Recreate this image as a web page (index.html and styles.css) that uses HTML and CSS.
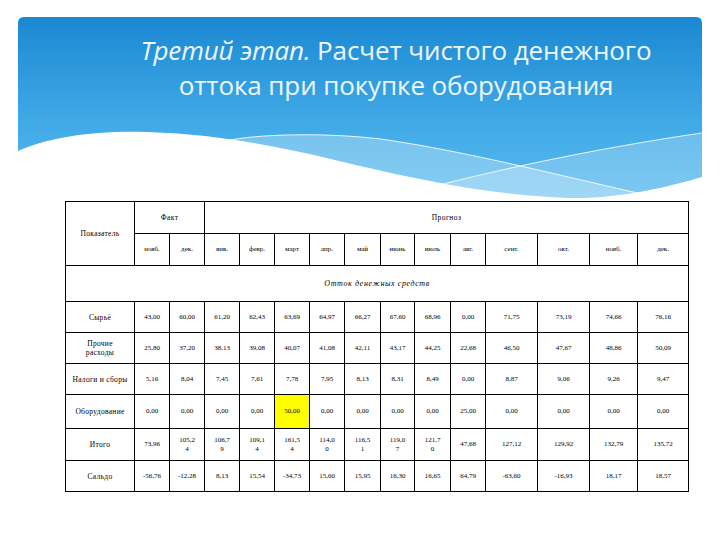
FILE: index.html
```html
<!DOCTYPE html>
<html lang="ru">
<head>
<meta charset="utf-8">
<title>Третий этап</title>
<link rel="stylesheet" href="styles.css">
</head>
<body>
<div class="slide">
  <header class="banner">
    <svg class="banner-bg" viewBox="0 0 684 184" width="684" height="184" aria-hidden="true">
      <defs>
        <linearGradient id="sky" x1="0" y1="0" x2="0" y2="1">
          <stop offset="0" stop-color="#1a88d2"/>
          <stop offset="0.55" stop-color="#3fa9e6"/>
          <stop offset="1" stop-color="#58baef"/>
        </linearGradient>
      </defs>
      <path d="M0,6 Q0,0 6,0 H678 Q684,0 684,6 V184 H0 Z" fill="url(#sky)"/>
      <path d="M212,123 C250,116 320,116 370,123 C450,135 540,158 628,178 L628,184 L212,184 Z" fill="#ffffff" fill-opacity="0.28"/>
      <path d="M425,167 C500,148 600,128 684,116 L684,184 L425,184 Z" fill="#ffffff" fill-opacity="0.22"/>
      <path d="M212,123 C250,116 320,116 370,123 C450,135 540,158 628,178" fill="none" stroke="#ffffff" stroke-opacity="0.85" stroke-width="1"/>
      <path d="M425,167 C500,148 600,128 684,116" fill="none" stroke="#ffffff" stroke-opacity="0.85" stroke-width="1"/>
      <path d="M0,134 C30,120 80,113 130,115 C190,117 240,126 282,135 C350,150 450,178 552,181 C600,182 650,170 684,160 V184 H0 Z" fill="#ffffff"/>
    </svg>
    <h1 class="title"><em>Третий этап.</em> Расчет чистого денежного<br>оттока при покупке оборудования</h1>
  </header>

  <table class="flow">
    <colgroup>
      <col class="c-label">
      <col class="c35"><col class="c35"><col class="c35"><col class="c35"><col class="c35"><col class="c35">
      <col class="c36"><col class="c34"><col class="c36"><col class="c35">
      <col class="c52"><col class="c52"><col class="c48"><col class="c51">
    </colgroup>
    <tr class="h1">
      <td rowspan="2" class="label head-label">Показатель</td>
      <td colspan="2" class="wide">Факт</td>
      <td colspan="12" class="wide">Прогноз</td>
    </tr>
    <tr class="h2">
      <td>нояб.</td><td>дек.</td><td>янв.</td><td>февр.</td><td>март</td><td>апр.</td><td>май</td><td>июнь</td><td>июль</td><td>авг.</td><td>сент.</td><td>окт.</td><td>нояб.</td><td>дек.</td>
    </tr>
    <tr class="section">
      <td colspan="15" class="section-title">Отток денежных средств</td>
    </tr>
    <tr class="r31">
      <td class="label">Сырьё</td>
      <td>43,00</td><td>60,00</td><td>61,20</td><td>62,43</td><td>63,69</td><td>64,97</td><td>66,27</td><td>67,60</td><td>68,96</td><td>0,00</td><td>71,75</td><td>73,19</td><td>74,66</td><td>76,16</td>
    </tr>
    <tr class="r31">
      <td class="label">Прочие<br>расходы</td>
      <td>25,80</td><td>37,20</td><td>38,13</td><td>39,08</td><td>40,07</td><td>41,08</td><td>42,11</td><td>43,17</td><td>44,25</td><td>22,68</td><td>46,50</td><td>47,67</td><td>48,86</td><td>50,09</td>
    </tr>
    <tr class="r31">
      <td class="label">Налоги и сборы</td>
      <td>5,16</td><td>8,04</td><td>7,45</td><td>7,61</td><td>7,78</td><td>7,95</td><td>8,13</td><td>8,31</td><td>8,49</td><td>0,00</td><td>8,87</td><td>9,06</td><td>9,26</td><td>9,47</td>
    </tr>
    <tr class="r34">
      <td class="label">Оборудование</td>
      <td>0,00</td><td>0,00</td><td>0,00</td><td>0,00</td><td class="mark">50,00</td><td>0,00</td><td>0,00</td><td>0,00</td><td>0,00</td><td>25,00</td><td>0,00</td><td>0,00</td><td>0,00</td><td>0,00</td>
    </tr>
    <tr class="r32">
      <td class="label">Итого</td>
      <td>73,96</td><td>105,2<br>4</td><td>106,7<br>9</td><td>109,1<br>4</td><td>161,5<br>4</td><td>114,0<br>0</td><td>116,5<br>1</td><td>119,0<br>7</td><td>121,7<br>0</td><td>47,68</td><td>127,12</td><td>129,92</td><td>132,79</td><td>135,72</td>
    </tr>
    <tr class="r31">
      <td class="label">Сальдо</td>
      <td>-56,76</td><td>-12,28</td><td>8,13</td><td>15,54</td><td>-34,73</td><td>15,60</td><td>15,95</td><td>16,30</td><td>16,65</td><td>64,79</td><td>-63,60</td><td>-16,93</td><td>18,17</td><td>18,57</td>
    </tr>
  </table>
</div>
</body>
</html>
```

FILE: styles.css
```css
html, body {
  margin: 0;
  padding: 0;
  background: #ffffff;
}

.slide {
  width: 720px;
  height: 540px;
  overflow: hidden;
  padding-top: 17px;
  box-sizing: border-box;
}

.banner {
  position: relative;
  width: 684px;
  height: 184px;
  margin-left: 18px;
}

.banner-bg {
  position: absolute;
  left: 0;
  top: 0;
  display: block;
}

.title {
  position: relative;
  margin: 0;
  padding: 16px 0 0 72px;
  font-family: "Open Sans", "Noto Sans", sans-serif;
  font-weight: 400;
  font-size: 26px;
  line-height: 35px;
  color: #eef7fd;
  text-align: center;
  letter-spacing: -0.1px;
}

.title em {
  font-style: italic;
}

.flow {
  margin-left: 65px;
  width: 623px;
  table-layout: fixed;
  border-collapse: collapse;
  font-family: "Liberation Serif", "DejaVu Serif", serif;
  font-size: 7px;
  color: #000000;
}

.flow td {
  border: 1px solid #000000;
  padding: 0 1px;
  text-align: center;
  vertical-align: middle;
  line-height: 9px;
}

.c-label { width: 69px; }
.c34 { width: 34px; }
.c35 { width: 35px; }
.c36 { width: 36px; }
.c48 { width: 48px; }
.c51 { width: 51px; }
.c52 { width: 52px; }

.h1 { height: 32px; }
.h2 { height: 32px; }
.section { height: 36px; }
.r31 { height: 31px; }
.r32 { height: 32px; }
.r34 { height: 34px; }

.head-label {
  padding-top: 8px;
}

.label {
  font-size: 7.5px;
  letter-spacing: 0.3px;
}

.wide {
  font-size: 7.5px;
  letter-spacing: 0.4px;
}

.section-title {
  font-style: italic;
  font-size: 8px;
  letter-spacing: 0.6px;
}

.mark {
  background: #ffff00;
}
```
